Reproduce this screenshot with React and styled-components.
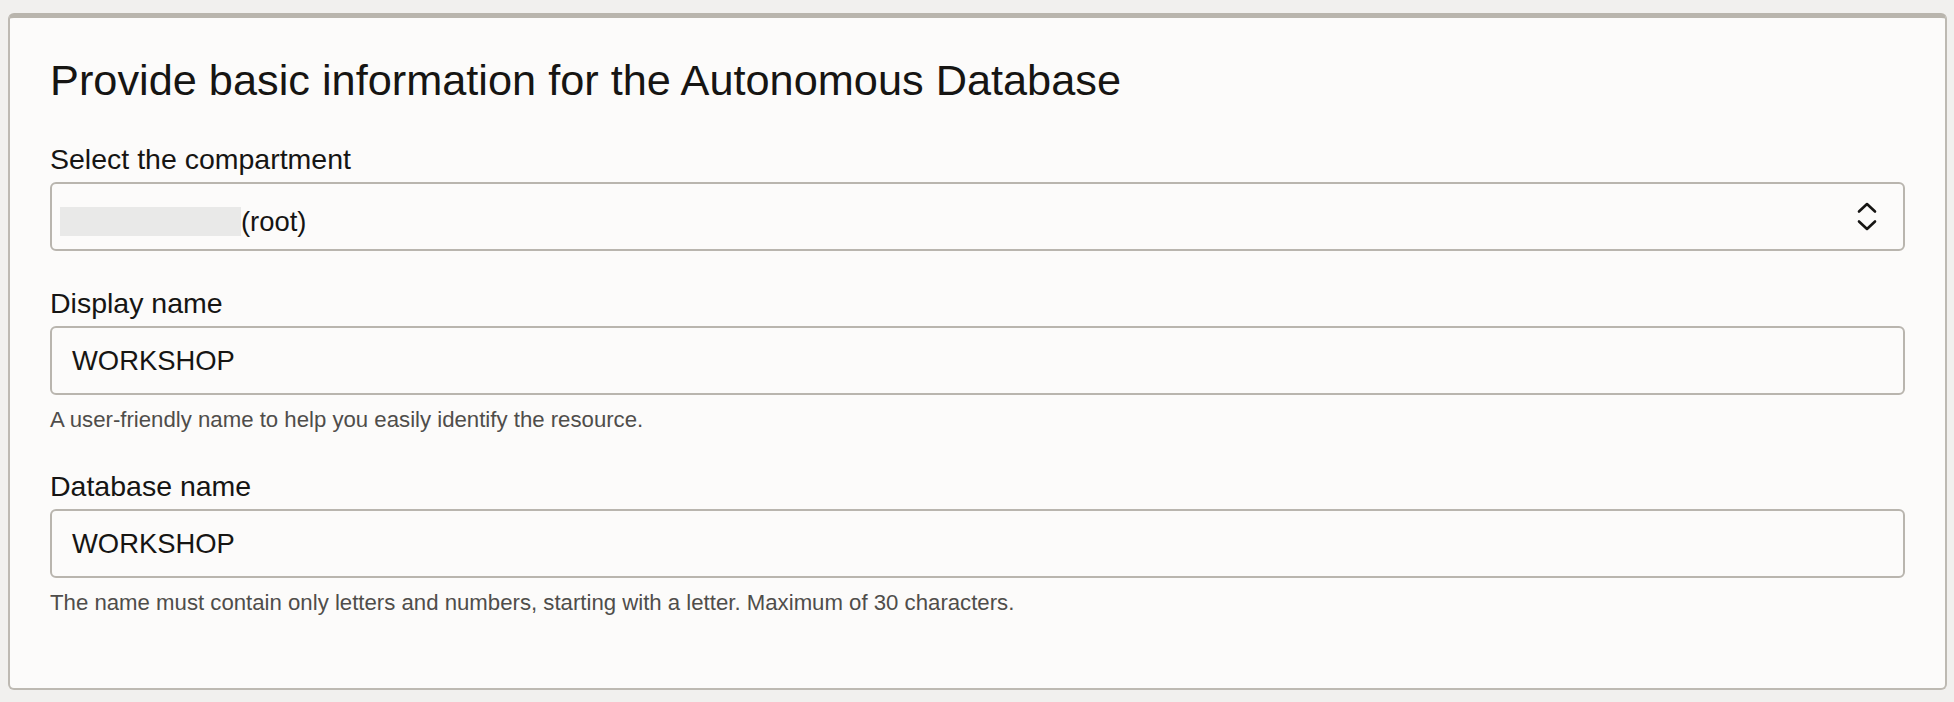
import React from 'react';
import styled, { createGlobalStyle } from 'styled-components';

const GlobalStyle = createGlobalStyle`
  html, body {
    margin: 0;
    padding: 0;
    background: #f1f0ee;
  }
  body {
    font-family: "Liberation Sans", Arial, Helvetica, sans-serif;
    color: #161513;
  }
`;

const Page = styled.div`
  padding: 13px 7px 0 8px;
  min-height: 702px;
  box-sizing: border-box;
`;

const Card = styled.section`
  background: #fcfbfa;
  border: 2px solid #bdb9b2;
  border-top: 5px solid #b9b5ad;
  border-radius: 6px;
  padding: 38px 40px 71px 40px;
`;

const Title = styled.h2`
  margin: 0 0 39px;
  font-size: 43.3px;
  line-height: 48px;
  font-weight: 400;
  color: #161513;
`;

const Fields = styled.div`
  display: flex;
  flex-direction: column;
  gap: 36px;
`;

const Field = styled.div`
  display: flex;
  flex-direction: column;
`;

const Label = styled.label`
  font-size: 28.5px;
  line-height: 32px;
  margin-bottom: 7px;
  color: #161513;
`;

const Control = styled.div`
  box-sizing: border-box;
  height: 69px;
  display: flex;
  align-items: center;
  border: 2px solid #b9b5ae;
  border-radius: 6px;
  background: #fcfbfa;
  padding: ${({ $select }) => ($select ? '0 26px 0 8px' : '0 20px')};
  font-size: 27.4px;
  color: #161513;
`;

const Masked = styled.span`
  display: inline-block;
  width: 181px;
  height: 29px;
  margin-top: 10px;
  background: #e9e9e8;
`;

const Value = styled.span`
  flex: 1;
  margin-top: 10px;
  white-space: nowrap;
`;

const Chevrons = styled.svg`
  flex: none;
  width: 20px;
  height: 29px;
`;

const Help = styled.p`
  margin: 11px 0 0;
  font-size: 22.2px;
  line-height: 28px;
  color: #4f4d4a;
`;

const UpDown = () => (
  <Chevrons viewBox="0 0 20 29" fill="none" stroke="#161513" strokeWidth="2.6" strokeLinecap="round" strokeLinejoin="round">
    <path d="M2 9.5 L10 2 L18 9.5" />
    <path d="M2 19.5 L10 27 L18 19.5" />
  </Chevrons>
);

const App = () => {
  return (
    <>
      <GlobalStyle />
      <Page>
        <Card>
          <Title>Provide basic information for the Autonomous Database</Title>
          <Fields>
            <Field>
              <Label>Select the compartment</Label>
              <Control $select>
                <Masked />
                <Value>(root)</Value>
                <UpDown />
              </Control>
            </Field>
            <Field>
              <Label>Display name</Label>
              <Control>WORKSHOP</Control>
              <Help>A user-friendly name to help you easily identify the resource.</Help>
            </Field>
            <Field>
              <Label>Database name</Label>
              <Control>WORKSHOP</Control>
              <Help>The name must contain only letters and numbers, starting with a letter. Maximum of 30 characters.</Help>
            </Field>
          </Fields>
        </Card>
      </Page>
    </>
  );
};

export default App;
